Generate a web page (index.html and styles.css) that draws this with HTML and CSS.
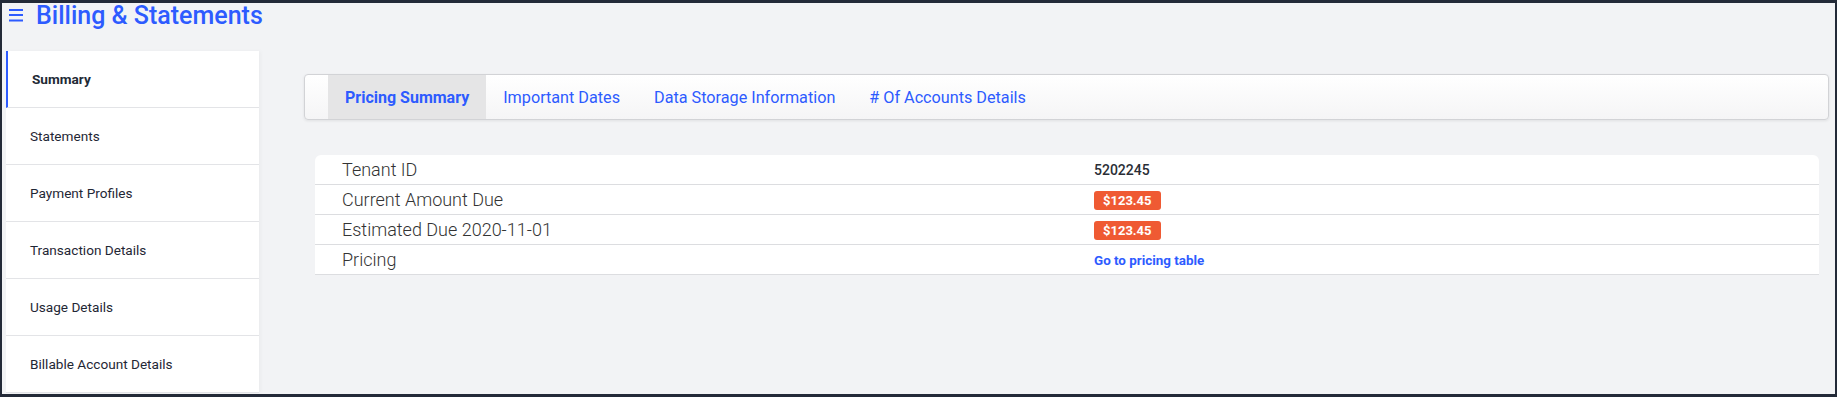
FILE: index.html
```html
<!DOCTYPE html>
<html lang="en">
<head>
  <meta charset="UTF-8" />
  <title>Billing &amp; Statements</title>
  <meta name="viewport" content="width=device-width,initial-scale=1" />
  <link rel="stylesheet" href="styles.css">
</head>
<body>
  <div class="frame">
    <header class="topbar">
      <span class="menu-icon">
        <svg width="14" height="14" viewBox="0 0 14 14" aria-hidden="true">
          <rect x="0" y="1" width="14" height="2" fill="currentColor" />
          <rect x="0" y="6" width="14" height="2" fill="currentColor" />
          <rect x="0" y="11.5" width="14" height="2" fill="currentColor" />
        </svg>
      </span>
      <h1>Billing &amp; Statements</h1>
    </header>

    <div class="layout">
      <nav class="sidebar">
        <a class="nav-item active" href="#">Summary</a>
        <a class="nav-item" href="#">Statements</a>
        <a class="nav-item" href="#">Payment Profiles</a>
        <a class="nav-item" href="#">Transaction Details</a>
        <a class="nav-item" href="#">Usage Details</a>
        <a class="nav-item" href="#">Billable Account Details</a>
      </nav>

      <main class="content">
        <div class="tabs">
          <a class="tab active" href="#">Pricing Summary</a>
          <a class="tab" href="#">Important Dates</a>
          <a class="tab" href="#">Data Storage Information</a>
          <a class="tab" href="#"># Of Accounts Details</a>
        </div>

        <table class="summary">
          <tr>
            <td class="label">Tenant ID</td>
            <td class="value"><span class="tenant">5202245</span></td>
          </tr>
          <tr>
            <td class="label">Current Amount Due</td>
            <td class="value"><span class="badge">$123.45</span></td>
          </tr>
          <tr>
            <td class="label">Estimated Due 2020-11-01</td>
            <td class="value"><span class="badge">$123.45</span></td>
          </tr>
          <tr>
            <td class="label">Pricing</td>
            <td class="value"><a class="link" href="#">Go to pricing table</a></td>
          </tr>
        </table>
      </main>
    </div>
  </div>
</body>
</html>
```

FILE: styles.css
```css
:root {
  --blue: #2d5bff;
  --frame: #232a38;
  --page-bg: #f2f3f5;
  --line: #dcdde0;
  --text: #1f2735;
}
html, body {
  margin: 0;
  height: 100%;
}
body {
  font-family: Roboto, 'Liberation Sans', Arial, sans-serif;
  background: var(--frame);
}
a {
  text-decoration: none;
}
.frame {
  box-sizing: border-box;
  height: 100vh;
  border-style: solid;
  border-color: var(--frame);
  border-width: 3px 2px 3px 2px;
  background: var(--page-bg);
  overflow: hidden;
}
.topbar {
  height: 48px;
  display: flex;
  align-items: flex-start;
  color: var(--blue);
}
.menu-icon {
  display: block;
  margin: 5px 0 0 7px;
  width: 14px;
  height: 14px;
}
.menu-icon svg {
  display: block;
}
h1 {
  margin: 0 0 0 13px;
  font-size: 25px;
  font-weight: 500;
  line-height: 26px;
  color: var(--blue);
}
.layout {
  display: flex;
  align-items: flex-start;
  padding-left: 4px;
}
.sidebar {
  width: 253px;
  flex: none;
  background: #fff;
  display: flex;
  flex-direction: column;
  box-shadow: 2px 0 4px rgba(0, 0, 0, 0.03);
}
.nav-item {
  box-sizing: border-box;
  height: 57px;
  display: flex;
  align-items: center;
  padding-left: 24px;
  border-bottom: 1px solid #e3e4e7;
  font-size: 13.6px;
  color: var(--text);
}
.nav-item.active {
  border-left: 2px solid var(--blue);
  padding-left: 24px;
  font-weight: 700;
  color: #222a35;
}
.content {
  flex: 1;
  min-width: 0;
  padding: 23px 6px 0 45px;
}
.tabs {
  box-sizing: border-box;
  height: 46px;
  display: flex;
  padding-left: 23px;
  border: 1px solid #d2d3d6;
  border-radius: 4px;
  background: linear-gradient(#ffffff, #f5f5f6);
  box-shadow: 0 1px 3px rgba(0, 0, 0, 0.08);
}
.tab {
  display: flex;
  align-items: center;
  padding: 0 17px;
  font-size: 16.2px;
  color: var(--blue);
}
.tab.active {
  background: #e5e5e6;
  font-weight: 700;
  font-size: 16px;
}
.summary {
  width: calc(100% - 21px);
  margin: 35px 0 0 11px;
  border-collapse: collapse;
  table-layout: fixed;
  background: #fff;
  border-radius: 6px 6px 0 0;
  overflow: hidden;
}
.summary td {
  height: 29px;
  padding: 0 27px;
  border-bottom: 1px solid var(--line);
  width: 50%;
}
.label {
  font-size: 18px;
  font-weight: 300;
  color: #333;
}
.tenant {
  font-size: 14px;
  font-weight: 500;
  color: #2a2e36;
}
.badge {
  display: inline-block;
  height: 19px;
  line-height: 19px;
  padding: 0 9px;
  border-radius: 3px;
  background: #ef5a33;
  color: #fff;
  font-size: 13px;
  font-weight: 700;
  vertical-align: middle;
}
.link {
  font-size: 13.4px;
  font-weight: 700;
  color: var(--blue);
}
```
